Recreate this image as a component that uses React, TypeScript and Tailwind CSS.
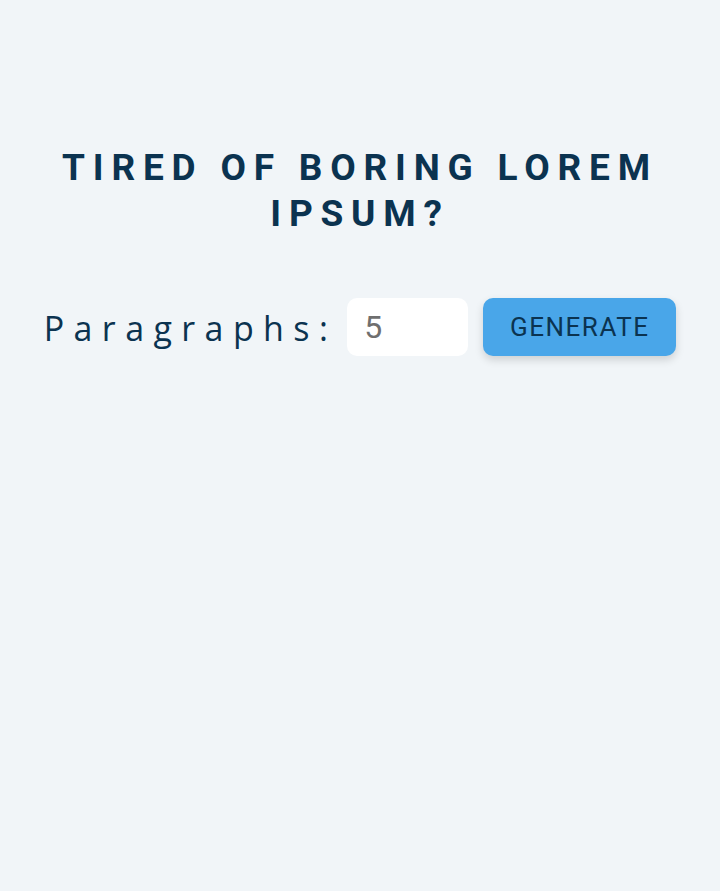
import React, { useState } from "react";

export default function App() {
  const [count, setCount] = useState("5");
  return (
    <div className="min-h-[891px] w-full bg-[#f1f5f8]">
      <section className="flex flex-col items-center pt-[145px]">
        <h3 className="w-[640px] text-center font-['Roboto',sans-serif] text-[37px] font-bold uppercase leading-[46px] tracking-[7.8px] text-[#0b3350]">
          tired of boring lorem ipsum?
        </h3>
        <form
          className="mt-[61px] flex items-center"
          onSubmit={(e) => e.preventDefault()}
        >
          <label
            htmlFor="amount"
            className="pt-[2px] font-['Open_Sans',sans-serif] text-[34px] tracking-[9.4px] text-[#0b3350]"
          >
            Paragraphs:
          </label>
          <input
            id="amount"
            type="text"
            value={count}
            onChange={(e) => setCount(e.target.value)}
            className="ml-[10px] h-[58px] w-[121px] rounded-[10px] border-0 bg-white px-[17px] font-['Roboto',sans-serif] text-[32px] text-[#6f6f6f] outline-none"
          />
          <button
            type="submit"
            className="ml-[15px] h-[58px] w-[193px] rounded-[10px] bg-[#49a6e9] font-['Roboto',sans-serif] text-[26px] uppercase tracking-[1.5px] text-[#0b3350] shadow-[0_4px_8px_rgba(0,0,0,0.15)]"
          >
            Generate
          </button>
        </form>
      </section>
    </div>
  );
}
